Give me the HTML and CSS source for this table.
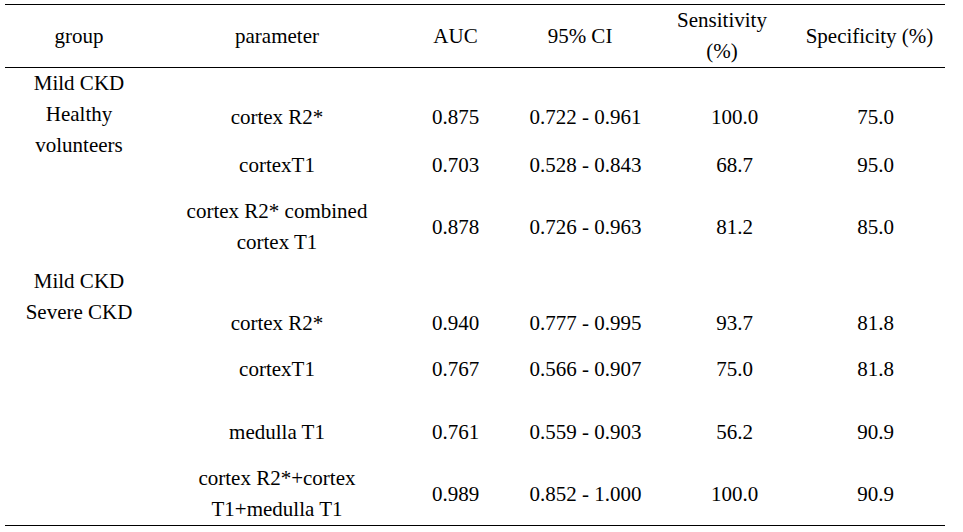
FILE: index.html
```html
<!DOCTYPE html>
<html>
<head>
<meta charset="utf-8">
<link rel="stylesheet" href="styles.css">
</head>
<body>
<div class="page">
<table class="roc">
  <colgroup>
    <col class="c-group"><col class="c-param"><col class="c-auc"><col class="c-ci"><col class="c-sens"><col class="c-spec">
  </colgroup>
  <thead>
    <tr>
      <th>group</th>
      <th>parameter</th>
      <th>AUC</th>
      <th>95% CI</th>
      <th>Sensitivity<br>(%)</th>
      <th>Specificity (%)</th>
    </tr>
  </thead>
  <tbody>
    <tr class="r1">
      <td class="group g1" rowspan="3">Mild CKD<br>Healthy<br>volunteers</td>
      <td>cortex R2*</td><td>0.875</td><td class="ci">0.722 - 0.961</td><td class="sens">100.0</td><td class="spec">75.0</td>
    </tr>
    <tr class="r2">
      <td>cortexT1</td><td>0.703</td><td class="ci">0.528 - 0.843</td><td class="sens">68.7</td><td class="spec">95.0</td>
    </tr>
    <tr class="r3">
      <td>cortex R2* combined<br>cortex T1</td><td>0.878</td><td class="ci">0.726 - 0.963</td><td class="sens">81.2</td><td class="spec">85.0</td>
    </tr>
    <tr class="r4">
      <td class="group g2" rowspan="4">Mild CKD<br>Severe CKD</td>
      <td>cortex R2*</td><td>0.940</td><td class="ci">0.777 - 0.995</td><td class="sens">93.7</td><td class="spec">81.8</td>
    </tr>
    <tr class="r5">
      <td>cortexT1</td><td>0.767</td><td class="ci">0.566 - 0.907</td><td class="sens">75.0</td><td class="spec">81.8</td>
    </tr>
    <tr class="r6">
      <td>medulla T1</td><td>0.761</td><td class="ci">0.559 - 0.903</td><td class="sens">56.2</td><td class="spec">90.9</td>
    </tr>
    <tr class="r7">
      <td>cortex R2*+cortex<br>T1+medulla T1</td><td>0.989</td><td class="ci">0.852 - 1.000</td><td class="sens">100.0</td><td class="spec">90.9</td>
    </tr>
  </tbody>
</table>
</div>
</body>
</html>
```
FILE: styles.css
```css
html, body {
  margin: 0;
  padding: 0;
  background: #ffffff;
}

.page {
  padding: 4px 18px 0 5px;
}

.roc {
  width: 940px;
  table-layout: fixed;
  border-collapse: collapse;
  font-family: "Liberation Serif", "Times New Roman", serif;
  font-size: 21px;
  line-height: 31px;
  color: #000;
}

.c-group { width: 148px; }
.c-param { width: 248px; }
.c-auc { width: 109px; }
.c-ci { width: 140px; }
.c-sens { width: 144px; }
.c-spec { width: 151px; }

.roc th {
  font-weight: normal;
  height: 62px;
  padding: 0;
  text-align: center;
  vertical-align: middle;
  white-space: nowrap;
}

.roc thead tr {
  border-top: 1px solid #000;
  border-bottom: 1px solid #000;
}

.roc tbody tr.r7 {
  border-bottom: 1px solid #000;
}

.roc td {
  padding: 0;
  text-align: center;
  vertical-align: middle;
  white-space: nowrap;
}

.roc td.ci { padding-left: 11px; }
.roc td.sens { padding-left: 25px; }
.roc td.spec { padding-left: 12px; }

.r1 td { padding-top: 34px; }
.r2 td { padding-top: 17px; }
.r3 td { padding-top: 15px; }
.r4 td { padding-top: 50px; }
.r5 td { padding-top: 15px; }
.r6 td { padding-top: 32px; }
.r7 td { padding-top: 15px; }

.roc td.group {
  vertical-align: top;
}

.roc td.g1 { padding-top: 0; }
.roc td.g2 { padding-top: 8px; }
```
